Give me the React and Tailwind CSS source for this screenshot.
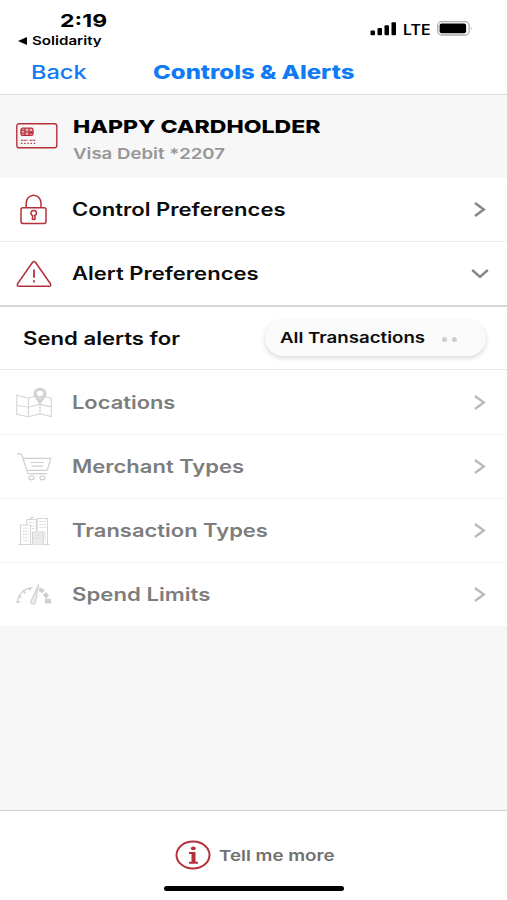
import clsx from 'clsx';

const RED = '#b5303a';

// System font rendered extra wide
function Wide({ className, children }) {
  return (
    <span className={clsx('inline-block origin-left whitespace-nowrap', className)}>{children}</span>
  );
}

function CardIcon() {
  return (
    <svg width="42" height="26" viewBox="0 0 42 26" fill="none" stroke={RED}>
      <rect x="0.8" y="0.8" width="40" height="24" rx="2.2" strokeWidth="1.4" />
      <rect x="5" y="5.2" width="12" height="7.2" rx="1.6" fill="#e9b9bc" strokeWidth="1.3" />
      <path d="M9 5.2v2.2H5M9 12.4v-2.2H5M13 5.2v2.2M13 12.4v-2.2h4M13 8.8h4M9.5 8.8H12M9 7.4v2.8M13 7.4v2.8" strokeWidth="1.3" />
      <path d="M5 17.3h6.6M13.6 17.3h6.2" strokeWidth="1.1" strokeDasharray="2.6 0.5" />
      <path d="M5 20.3h16" strokeWidth="1.2" strokeDasharray="1.4 1.8" />
    </svg>
  );
}

function LockIcon() {
  return (
    <svg width="38" height="32" viewBox="0 0 38 32" fill="none" stroke={RED} strokeWidth="1.5">
      <rect x="6" y="13.8" width="25" height="15.6" rx="1.8" />
      <path d="M11.2 13.8V9.2a7.4 8 0 0 1 14.8 0v4.6" />
      <path d="M17.3 25l.4-3.4a2.8 2.7 0 1 1 2 0l.4 3.4q-1.4.8-2.8 0z" strokeWidth="1.5" />
    </svg>
  );
}

function WarningIcon() {
  return (
    <svg width="38" height="32" viewBox="0 0 38 32" fill="none" stroke={RED} strokeWidth="1.5" strokeLinejoin="round">
      <path d="M17.4 4.5q1.6-2 3.2 0l14.8 21.3q1.2 2.5-1.4 2.5H4q-2.6 0-1.4-2.5z" />
      <path d="M19 11.5v8.3M19 22.2v2.2" strokeWidth="1.8" />
    </svg>
  );
}

function MapIcon() {
  return (
    <svg width="38" height="32" viewBox="0 0 38 32" fill="none" stroke="#d4d4d4" strokeWidth="1.1">
      <path d="M28.5 9.3l7.8 1.8v18.4L25 26.8 13.5 29.8 1.8 27.3V8.3l11.7 2.7 6.7-1.7" />
      <path d="M13.5 11v18.6M25 17v9.8M1.8 18.5l11.7 1.8 11-3.2 11.8 2.8" />
      <path d="M25 16.4c-3-4.3-6-6.9-6-9.7a6 5.3 0 0 1 12 0c0 2.8-3 5.4-6 9.7z" fill="#d8d8d8" stroke="#cacaca" />
      <ellipse cx="25" cy="6.6" rx="3.6" ry="3.3" fill="#fff" stroke="#d2d2d2" />
    </svg>
  );
}

function CartIcon() {
  return (
    <svg width="38" height="32" viewBox="0 0 38 32" fill="none" stroke="#cfcfcf" strokeWidth="1.2">
      <path d="M2 2.8h3.2q1.2 0 1.7 1.2L12.2 20.8q.4 1.8 1.6 1.8h18.4M7.8 7.4h28l-3.6 12H11.6" />
      <path d="M15.5 11.5h13.5M16.5 15.2h11.5" />
      <ellipse cx="16.5" cy="26.8" rx="2.6" ry="2" />
      <ellipse cx="27.5" cy="26.8" rx="2.6" ry="2" />
    </svg>
  );
}

function BuildingsIcon() {
  return (
    <svg width="38" height="32" viewBox="0 0 38 32" fill="none" stroke="#d6d6d6" strokeWidth="1.1">
      <path d="M3 29.5h31.5M5.5 29.5V10h9.5M11.5 10V6q0-1.6 1.8-1.6h6.4q1.7 0 1.7 1.6v10M16 4.2V2.3h2.8M22.2 16V3.5h10.3v26M15.5 10v19.5" />
      <path d="M17.5 29.5V17h10.8v12.5" fill="#ececec" />
      <path d="M8 13.3h5.5M8 16.3h5.5M8 19.3h5.5M8 22.3h5.5M8 25.3h5.5M24.5 6.5h6M24.5 9.5h6M24.5 12.5h6M14 7.5h5.5M15.5 11h4M17 13.5h3M19.5 20h7M19.5 23h7M30 16v10" strokeDasharray="1.5 0.8" />
    </svg>
  );
}

function GaugeIcon() {
  return (
    <svg width="38" height="32" viewBox="0 0 38 32" fill="none" stroke="#cfcfcf">
      <path d="M2.2 24C3.2 14.5 9.5 8.8 17.5 8.8M24 9.3q3 .8 5 2.8" strokeWidth="1.2" />
      <path d="M1.5 22.8h3.4M3.3 17l3.2 1.5M8 12l2.4 2.2M14.3 8.8l1 2.7" strokeWidth="1.7" />
      <path d="M24.5 10.2q2.2 1 3.8 2.6M29.5 14.5l3 3.8" strokeWidth="4" />
      <path d="M29.7 19.8h6l.6 4.7h-6z" fill="#cfcfcf" stroke="none" />
      <path d="M23.6 5.5l-7.3 16.1a2.4 2.1 0 1 0 4.2 1.3z" fill="#ececec" strokeWidth="1.1" />
    </svg>
  );
}

function Chevron({ down, className }) {
  return (
    <svg width="20" height="20" viewBox="0 0 20 20" fill="none" stroke="currentColor" strokeWidth="2.4" className={className}>
      <path d={down ? 'M2.2 6l7.8 6.8L17.8 6' : 'M5 3l8.8 6.5L5 16'} />
    </svg>
  );
}

const alertRows = [
  { label: 'Locations', icon: MapIcon, scale: 'scale-x-[1.215]' },
  { label: 'Merchant Types', icon: CartIcon, scale: 'scale-x-[1.222]' },
  { label: 'Transaction Types', icon: BuildingsIcon, scale: 'scale-x-[1.22]' },
  { label: 'Spend Limits', icon: GaugeIcon, scale: 'scale-x-[1.233]' },
];

function Row({ icon: Icon, label, scale, muted, down, className }) {
  return (
    <div className={clsx('flex items-center bg-white pl-[15px] pr-[17px]', className)}>
      <div className="w-[57px] shrink-0">
        <Icon />
      </div>
      <Wide className={clsx('text-[18px] font-semibold', scale, muted ? 'text-[#7d7d7d]' : 'text-[#0c0c0c]')}>
        {label}
      </Wide>
      <Chevron down={down} className={clsx('ml-auto', muted ? 'text-[#b9b9b9]' : 'text-[#858585]')} />
    </div>
  );
}

function StatusBar() {
  return (
    <div className="flex h-[50px] justify-between pl-[18px] pr-[34px]">
      <div className="pt-[9px]">
        <div className="pl-[42px] leading-6">
          <Wide className="scale-x-[1.28] text-[18px] font-bold">2:19</Wide>
        </div>
        <div className="flex h-4 items-center">
          <svg width="14" height="10" viewBox="0 0 14 10">
            <path d="M0 5l9-4v8z" />
          </svg>
          <Wide className="scale-x-[1.26] text-[12px] leading-4 font-semibold">Solidarity</Wide>
        </div>
      </div>
      <div className="flex h-[57px] items-center">
        <svg width="26" height="14" viewBox="0 0 26 14">
          <rect x="0.5" y="8.5" width="4.5" height="4.8" rx="1" />
          <rect x="7.5" y="6" width="4.5" height="7.3" rx="1" />
          <rect x="14.5" y="3.3" width="4.5" height="10" rx="1" />
          <rect x="21.5" y="0.3" width="4.5" height="13" rx="1" />
        </svg>
        <div className="ml-[7px] w-[34px]">
          <Wide className="scale-x-[1.13] text-[14px] font-semibold">LTE</Wide>
        </div>
        <svg width="36" height="15" viewBox="0 0 36 15">
          <rect x="0.7" y="0.7" width="31.5" height="13.3" rx="4" fill="none" stroke="#adadad" strokeWidth="1.3" />
          <rect x="2.6" y="2.5" width="26.5" height="9.7" rx="2" />
          <path d="M34 5.5q1.6 1.8 0 4z" fill="#adadad" />
        </svg>
      </div>
    </div>
  );
}

export default function App() {
  return (
    <div className="flex h-[900px] w-[507px] flex-col overflow-hidden bg-white font-['Inter',sans-serif] text-black">
      <header className="h-[95px] border-b border-[#dedede]">
        <StatusBar />
        <div className="flex h-11 items-center pt-0.5 pl-[31px] text-[#0f7bf5]">
          <div className="w-[122px]">
            <Wide className="scale-x-[1.24] text-[19px] font-medium">Back</Wide>
          </div>
          <Wide className="scale-x-[1.26] text-[19px] font-extrabold">Controls &amp; Alerts</Wide>
        </div>
      </header>

      <section className="flex h-[83px] bg-[#f7f7f7] pl-4">
        <div className="w-[57px] pt-[28px]">
          <CardIcon />
        </div>
        <div className="flex flex-col pt-[19px]">
          <Wide className="scale-x-[1.28] text-[18px] leading-[26px] font-extrabold">HAPPY CARDHOLDER</Wide>
          <Wide className="scale-x-[1.24] text-[15px] leading-[27px] font-semibold text-[#969696]">Visa Debit *2207</Wide>
        </div>
      </section>

      <Row icon={LockIcon} label="Control Preferences" scale="scale-x-[1.226]" className="h-16 border-b border-[#ebebeb]" />
      <Row icon={WarningIcon} label="Alert Preferences" scale="scale-x-[1.224]" down className="h-[65px] border-b-2 border-[#d6d6d6]" />

      <div className="flex h-[63px] items-center justify-between border-b border-[#e8e8e8] pr-[21px] pl-[23px]">
        <Wide className="scale-x-[1.23] text-[18px] font-semibold text-[#0c0c0c]">Send alerts for</Wide>
        <button className="flex h-[36px] w-[221px] items-center rounded-full bg-[#fafafa] pl-[15px] shadow-[0_2px_5px_rgba(0,0,0,0.16)]">
          <span className="w-[162px] pb-px text-left">
            <Wide className="scale-x-[1.245] text-[15px] font-semibold text-[#0c0c0c]">All Transactions</Wide>
          </span>
          <span className="flex gap-[5px] pt-0.5">
            <span className="size-[5px] rounded-full bg-[#cdcdcd]" />
            <span className="size-[5px] rounded-full bg-[#cdcdcd]" />
          </span>
        </button>
      </div>

      <div className="bg-white pt-px">
        {alertRows.map((row) => (
          <Row key={row.label} {...row} muted className="h-16 border-b border-[#f4f4f4]" />
        ))}
      </div>

      <div className="flex-1 bg-[#f7f7f7]" />

      <footer className="flex h-[90px] flex-col items-center border-t border-[#cfcfcf] pl-px">
        <div className="flex h-[75px] w-[158px] items-center pt-[13px]">
          <svg width="36" height="30" viewBox="0 0 36 30" className="shrink-0">
            <ellipse cx="18" cy="15" rx="16.5" ry="13.5" fill="none" stroke={RED} strokeWidth="2" />
            <ellipse cx="18.3" cy="8.3" rx="2.4" ry="1.9" fill={RED} />
            <path d="M14 12h6.5v9.8H23v1.9h-9v-1.9h2.5v-7.9H14z" fill={RED} />
          </svg>
          <Wide className="ml-2 scale-x-[1.25] pt-0.5 text-[15px] font-semibold text-[#707070]">Tell me more</Wide>
        </div>
        <div className="h-[5px] w-[180px] rounded-full bg-black" />
      </footer>
    </div>
  );
}
